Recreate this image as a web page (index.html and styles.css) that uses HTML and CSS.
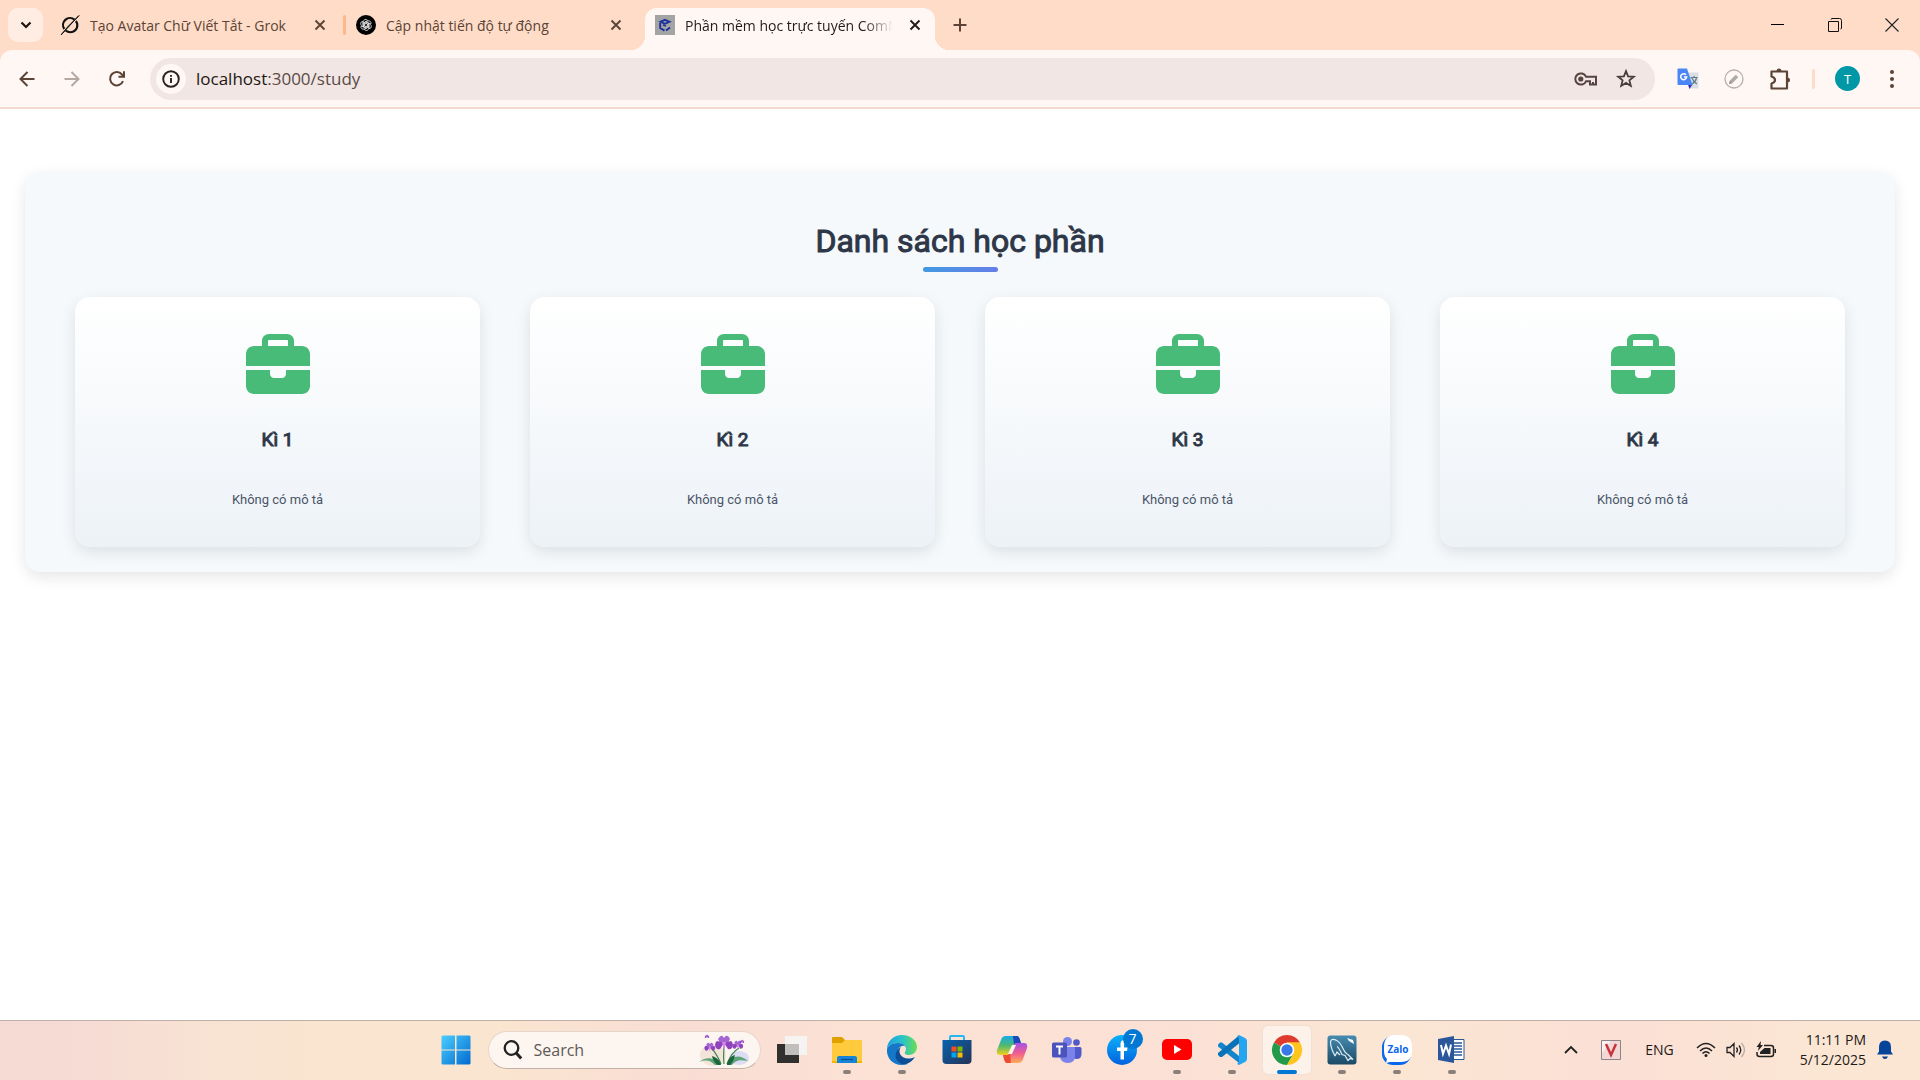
FILE: index.html
```html
<!DOCTYPE html>
<html lang="vi">
<head>
<meta charset="utf-8">
<meta name="viewport" content="width=device-width, initial-scale=1">
<title>Phần mềm học trực tuyến</title>
<link rel="stylesheet" href="styles.css">
</head>
<body>
<svg class="defs" aria-hidden="true">
  <symbol id="close" viewBox="0 0 12 12"><path d="M1.5 1.5l9 9m0-9l-9 9" stroke="currentColor" stroke-width="1.9" fill="none"/></symbol>
  <symbol id="briefcase" viewBox="0 0 512 480"><path fill="#48bb78" d="M184 48H328c4.4 0 8 3.6 8 8V96H176V56c0-4.4 3.6-8 8-8zm-56 8V96H64C28.7 96 0 124.7 0 160v96H512V160c0-35.3-28.7-64-64-64H384V56c0-30.9-25.1-56-56-56H184c-30.9 0-56 25.1-56 56zM512 288H320v32c0 17.7-14.3 32-32 32H224c-17.7 0-32-14.3-32-32V288H0V416c0 35.3 28.7 64 64 64H448c35.3 0 64-28.7 64-64V288z"/></symbol>
</svg>

<header class="browser">
  <div class="tabstrip">
    <button class="tab-search" aria-label="Search tabs"><svg width="12" height="8" viewBox="0 0 12 8"><path d="M1.500 1.500L6 6l4.500-4.500" fill="none" stroke="#1d1512" stroke-width="2.200"/></svg></button>
    <div class="tab tab-first">
      <svg class="favicon" viewBox="0 0 20 20"><path d="M14.500 4.600A7 7 0 0 0 4.300 14M5.700 15.500A7 7 0 0 0 15.900 6" fill="none" stroke="#111" stroke-width="2.200"/><path d="M1 20L19 .5 8 11.500z" fill="#111" stroke="#111"/></svg>
      <span class="tab-title">Tạo Avatar Chữ Viết Tắt - Grok</span>
      <button class="icon-button" aria-label="Close tab"><svg width="12" height="12"><use href="#close"/></svg></button>
    </div>
    <span class="divider"></span>
    <div class="tab tab-second">
      <svg class="favicon" viewBox="0 0 20 20"><circle cx="10" cy="10" r="10" fill="#000"/><g fill="none" stroke="#fff" stroke-width=".7"><path id="petal" d="M7.400 11.500V6.700a2.300 2.300 0 0 1 4.200-1.300l-3 1.800v4"/><use href="#petal" transform="rotate(60 10 10)"/><use href="#petal" transform="rotate(120 10 10)"/><use href="#petal" transform="rotate(180 10 10)"/><use href="#petal" transform="rotate(240 10 10)"/><use href="#petal" transform="rotate(300 10 10)"/></g></svg>
      <span class="tab-title">Cập nhật tiến độ tự động</span>
      <button class="icon-button" aria-label="Close tab"><svg width="12" height="12"><use href="#close"/></svg></button>
    </div>
    <div class="tab tab-active">
      <svg class="favicon" viewBox="0 0 20 20"><path fill="#a3a5a5" d="M0 0h20v20H0z"/><path d="M14.500 6.800L10 4.800 5.500 6.800 10 8.800zM5.200 8v5l4.300 2.600M15 12.500l-4 3" fill="none" stroke="#1c2f9c" stroke-width="1.900"/><path d="M8 10l3 1" stroke="#1c2f9c" stroke-width="1.500"/></svg>
      <span class="tab-title">Phần mềm học trực tuyến ComM</span>
      <button class="icon-button" aria-label="Close tab"><svg width="12" height="12"><use href="#close"/></svg></button>
    </div>
    <button class="icon-button new-tab" aria-label="New tab"><svg width="14" height="14"><path d="M7 .5v13M.5 7h13" stroke="currentColor" stroke-width="2"/></svg></button>
    <div class="window-controls">
      <button class="window-button" aria-label="Minimize"><svg width="14" height="14"><path d="M0 6.500h13" stroke="#000"/></svg></button>
      <button class="window-button" aria-label="Restore"><svg width="14" height="14" fill="none" stroke="#111"><path d="M.5 3.500h10v10H.5zM3 1.500Q3 .5 4 .5h7.500q2 0 2 2V10q0 1-1 1"/></svg></button>
      <button class="window-button" aria-label="Close"><svg width="14" height="14"><path d="M.5.5l13 13m0-13l-13 13" stroke="#222" stroke-width="1.100"/></svg></button>
    </div>
  </div>

  <div class="toolbar">
    <div class="nav-buttons">
      <button class="icon-button" aria-label="Back"><svg width="16" height="16"><path d="M15.500 8H1.500M8.500 1L1.500 8l7 7" fill="none" stroke="currentColor" stroke-width="2"/></svg></button>
      <button class="icon-button faded" aria-label="Forward"><svg width="16" height="16"><path d="M.5 8h14M7.500 1l7 7-7 7" fill="none" stroke="currentColor" stroke-width="2"/></svg></button>
      <button class="icon-button" aria-label="Reload"><svg width="16" height="16"><path d="M14 10.200A6.700 6.700 0 1 1 13 3.500l1.500 1.700" fill="none" stroke="currentColor" stroke-width="2"/><path d="M16 .3v6.500H9.500v-2H14V.3z" fill="currentColor"/></svg></button>
    </div>
    <div class="address">
      <button class="site-info" aria-label="Site information"><svg width="18" height="18" fill="none" stroke="#2a211e" stroke-width="1.900"><circle cx="9" cy="9" r="7.800"/><path d="M9 8v5M9 5v1.800"/></svg></button>
      <a class="url" href="#">localhost<span>:3000/study</span></a>
      <button class="icon-button address-icon" aria-label="Passwords"><svg width="23" height="14" fill="none" stroke="#55443f" stroke-width="2"><path d="M12 4.700A5.600 5.600 0 1 0 12 9.300h4V12.500h3V10h0v2.500h3V4.700z"/><circle cx="6.800" cy="7" r="2.600" fill="#55443f" stroke="none"/></svg></button>
      <button class="icon-button address-icon" aria-label="Bookmark"><svg width="20" height="20" viewBox="0 0 20 20"><path d="M10 2.200l2.100 5.200 5.700.4-4.400 3.600 1.400 5.500L10 13.900l-4.800 3 1.400-5.500-4.400-3.600 5.700-.4z" fill="none" stroke="#4a3c37" stroke-width="1.800"/></svg></button>
    </div>
    <div class="extensions">
      <button class="icon-button" aria-label="Google Translate"><svg width="22" height="22"><path d="M9 4.500h12.500v16H12z" fill="#dcdfe2"/><path d="M13.500 9.500h7M17 8v1.500M15 10c1 3 3 5 5 6M19.500 10c-.7 3-2.500 5-4.500 6" stroke="#607d8b" stroke-width="1.200" fill="none"/><path d="M11 16.500h4.500l-3 4.500z" fill="#3730c8"/><path d="M1.500.5H10L15.500 17h-14Q.5 17 .5 16V1.500q0-1 1-1z" fill="#4a86f5"/><path d="M9 6.700A3 3 0 1 0 9.700 9H7" fill="none" stroke="#fff" stroke-width="1.500"/></svg></button>
      <button class="icon-button" aria-label="Editor"><svg width="20" height="20"><circle cx="10" cy="10" r="9" fill="none" stroke="#b5b1af" stroke-width="1.300"/><path d="M6.500 13.500l6.500-6.500" stroke="#aaa" stroke-width="3.500"/><path d="M5 15l.8-3 2.200 2.200z" fill="#888"/></svg></button>
      <button class="icon-button" aria-label="Extensions"><svg width="22" height="22"><path d="M2.500 3.500h15.500v17H2.500v-5q3.500-1 3.500-3.500T2.500 8.500z" fill="none" stroke="#5b4335" stroke-width="2.200" stroke-linejoin="round"/><path d="M7.500 3.500a2.500 3 0 0 1 5 0zM18 9.500a3 2.500 0 0 1 0 5z" fill="#5b4335"/></svg></button>
    </div>
    <span class="divider divider-short"></span>
    <button class="avatar">T</button>
    <button class="icon-button" aria-label="Menu"><svg width="6" height="18" fill="#5b4335"><circle cx="3" cy="2" r="2"/><circle cx="3" cy="9" r="2"/><circle cx="3" cy="16" r="2"/></svg></button>
  </div>
</header>

<main class="page">
  <section class="panel">
    <h1 class="panel-title">Danh sách học phần</h1>
    <div class="cards">
      <article class="card"><svg class="card-icon"><use href="#briefcase"/></svg><h2>Kì 1</h2><p>Không có mô tả</p></article>
      <article class="card"><svg class="card-icon"><use href="#briefcase"/></svg><h2>Kì 2</h2><p>Không có mô tả</p></article>
      <article class="card"><svg class="card-icon"><use href="#briefcase"/></svg><h2>Kì 3</h2><p>Không có mô tả</p></article>
      <article class="card"><svg class="card-icon"><use href="#briefcase"/></svg><h2>Kì 4</h2><p>Không có mô tả</p></article>
    </div>
  </section>
</main>

<footer class="taskbar">
  <div class="task-center">
    <button class="start" aria-label="Start"><svg width="30" height="30"><defs><linearGradient id="win" x2="1" y2="1" gradientUnits="userSpaceOnUse" gradientTransform="scale(30)"><stop stop-color="#4cd0ff"/><stop offset="1" stop-color="#0068cf"/></linearGradient></defs><path fill="url(#win)" d="M1.500.5H14v14H.5v-13zM15.500.5H28.500l1 1v13h-14zM.5 15.500H14v14H1.500l-1-1zM15.500 15.500h14v13l-1 1h-13z"/></svg></button>
    <label class="search">
      <svg width="20" height="20" fill="none" stroke="#222" stroke-width="2.300"><circle cx="8.500" cy="8" r="6.800"/><path d="M13.200 13l5 5.500" stroke-width="3"/></svg>
      <input type="text" placeholder="Search" aria-label="Search">
      <svg width="56" height="34" viewBox="0 0 56 34">
        <ellipse cx="17" cy="22" rx="13" ry="11" fill="#f4e3d8"/><ellipse cx="43" cy="25" rx="10" ry="7" fill="#dcdcf4"/>
        <path d="M28 31C27 22 28 15 28 12M25 31C22 23 18 18 15 14M31 31c3-8 7-13 12-16" stroke="#3b8a48" stroke-width="1.200" fill="none"/>
        <path d="M24 32C18 23 9 24 3 29c8-3 12-1 16 3zM31 32c5-10 13-11 21-4-9-2-13 0-16 4z" fill="#5da578"/><path d="M25 32c-1-5-5-8-9-9 1 5 4 8 6 9zM31 32c0-5 4-9 8-10-1 5-3 8-5 10z" fill="#1d653e"/>
        <g id="iris"><path d="M22 6c3-4 4-4 6-1 2-3 4-3 6 1l-3 6h-6z" fill="#a566d4"/><path d="M21 8c-4 3-1 10 3 8l4-6 4 6c4 2 7-5 3-8l-7 2z" fill="#8f43bd"/><path d="M26 9h4l-2 9z" fill="#cf8be6"/></g>
        <use href="#iris" transform="translate(-3 8) scale(.6)"/><use href="#iris" transform="translate(25 6) scale(.6)"/><use href="#iris" transform="translate(4 1) scale(.25)"/><use href="#iris" transform="translate(39 6) scale(.25)"/>
      </svg>
    </label>
    <nav class="apps" aria-label="Taskbar">
      <button class="app" aria-label="Task view"><svg viewBox="0 0 30 30"><path d="M0 9h22v19H0z" fill="#30302e"/><path d="M8 1h22v19H8z" fill="#f4f4f4" opacity=".95"/><path d="M8 9h14v11H8z" fill="#c0bfbd"/></svg></button>
      <button class="app running" aria-label="File Explorer"><svg viewBox="0 0 30 30"><path d="M0 3q0-1 1-1h9l3 3v5H0z" fill="#e0a100"/><path d="M0 8h10l3-3h16q1 0 1 1v22H0z" fill="#ffcb3d"/><path d="M0 26h30v2H0z" fill="#f5b400"/><path d="M5 28v-5q0-2 2-2h16q2 0 2 2v5z" fill="#1684d8"/><path d="M9 24.500h12" stroke="#064f91" stroke-width="1.200"/></svg></button>
      <button class="app running" aria-label="Edge"><svg viewBox="0 0 30 30"><defs><linearGradient id="edge"><stop stop-color="#1f9fe0"/><stop offset=".5" stop-color="#28c3cc"/><stop offset="1" stop-color="#6ade50"/></linearGradient></defs><path d="M0 14C0 6 7 0 15 0c9 0 15 6 15 12 0 5-4 8-8 8-3 0-5-1-4-3 3-4-1-9-7-9C5 8 1 11 0 14z" fill="url(#edge)"/><path d="M0 14c1-3 5-6 11-6 3 0 6 1 7 3-5-1-8 3-7 8 1 6 6 10 10 10C9 33-1 25 0 14z" fill="#1577c8"/><path d="M14 12c-5 7 3 15 14 10-4 6-10 9-15 6-7-4-5-13 1-16z" fill="#0c4f96"/></svg></button>
      <button class="app" aria-label="Microsoft Store"><svg viewBox="0 0 30 30"><defs><linearGradient id="store" x2="1" y2="1"><stop stop-color="#0763b0"/><stop offset="1" stop-color="#263354"/></linearGradient></defs><path d="M8 7V2q0-1 1-1h12q1 0 1 1v5" fill="none" stroke="#25b9f2" stroke-width="2"/><path d="M.5 5h29v20q0 4-4 4h-21q-4 0-4-4z" fill="url(#store)"/><path d="M9.500 11.500h5v5h-5z" fill="#f25022"/><path d="M15.500 11.500h5v5h-5z" fill="#7fba00"/><path d="M9.500 17.500h5v5h-5z" fill="#00a4ef"/><path d="M15.500 17.500h5v5h-5z" fill="#ffb900"/></svg></button>
      <button class="app" aria-label="Copilot"><svg viewBox="0 0 30 30"><defs><linearGradient id="cop1" x2="0" y2="1"><stop stop-color="#18a9e8"/><stop offset=".5" stop-color="#4dba70"/><stop offset="1" stop-color="#f6d01e"/></linearGradient><linearGradient id="cop2" x2="0" y2="1"><stop stop-color="#a353e8"/><stop offset=".5" stop-color="#ee5b92"/><stop offset="1" stop-color="#ffac55"/></linearGradient></defs><path d="M9 1h11q2 0 3 4l1 3h-4q-3 0-4 3l-2 6q-1 3-4 3H3q-4 0-3-5L4 5q1-4 5-4z" fill="url(#cop1)"/><path d="M16 1h4q2 0 3 4l1 3h-4q-2 0-3 2z" fill="#1c48b8"/><path d="M21 28H10q-2 0-3-4l-1-4h4q3 0 4-3l2-6q1-3 4-3h7q4 0 3 5l-4 11q-1 4-5 4z" fill="url(#cop2)"/><path d="M14 28h-4q-2 0-3-4l-1-4h4q2 0 3-2z" fill="#ee4b35"/><path d="M15 10h4l-4 9h-4z" fill="#fff3ea"/></svg></button>
      <button class="app" aria-label="Teams"><svg viewBox="0 0 30 30"><circle cx="15.500" cy="6.500" r="4.500" fill="#7b83eb"/><circle cx="24.500" cy="7.500" r="3.300" fill="#5059c9"/><path d="M20 12h8q1.500 0 1.500 1.500V19q0 5-5 5-4 0-4.500-3z" fill="#5059c9"/><path d="M10 12h12q1 0 1 1v8q0 7-7 7-8 0-8-8z" fill="#7b83eb"/><rect y="7.500" width="15" height="15" rx="1.500" fill="#4b53bc"/><path d="M4 11.500h7M7.500 11.500v8" stroke="#fff" stroke-width="2"/></svg></button>
      <button class="app" aria-label="Facebook"><svg viewBox="0 0 30 30"><defs><linearGradient id="fb" x2="0" y2="1"><stop stop-color="#0db1fa"/><stop offset="1" stop-color="#0062df"/></linearGradient></defs><circle cx="15" cy="15" r="15" fill="url(#fb)"/><path d="M13.500 24.500V16H10v-3.500h3.500V9q0-4 4-4l1 .2v3Q17 8 17 10v2.500h3.500L20 16h-3v8.500z" fill="#fff"/></svg><span class="badge">7</span></button>
      <button class="app running" aria-label="YouTube"><svg viewBox="0 0 30 30"><rect y="4" width="30" height="21" rx="5" fill="#f00"/><path d="M12 10l7.500 4.500L12 19z" fill="#fff"/></svg></button>
      <button class="app running" aria-label="Visual Studio Code"><svg viewBox="0 0 30 30"><path d="M1 9.500l2-2h2L22 21v7L1 11.500z" fill="#1285cc"/><path d="M1 20l2 2h2L22 8.500V.5L1 18z" fill="#0873b8"/><path d="M22 0l6 3q2 1 2 3v18q0 2-2 3l-6 3-2-1 2-2V3l-2-2z" fill="#25a5ef"/></svg></button>
      <button class="app running current" aria-label="Chrome"><svg viewBox="0 0 30 30"><path d="M15 15L2 7.500A15 15 0 0 1 28 7.500z" fill="#df3a2e"/><path d="M15 15L2 7.500A15 15 0 0 0 15 30l6.500-11.200z" fill="#219b4a"/><path d="M15 15V7.500h13A15 15 0 0 1 15 30l6.500-11.200z" fill="#fdc51e"/><path d="M15 7.500h13L15 15z" fill="#fdc51e"/><circle cx="15" cy="15" r="7.300" fill="#fff"/><circle cx="15" cy="15" r="5.700" fill="#3978e8"/></svg></button>
      <button class="app running" aria-label="MySQL Workbench"><svg viewBox="0 0 30 30"><defs><linearGradient id="sql" x2="0" y2="1"><stop stop-color="#468bb0"/><stop offset="1" stop-color="#1c4a66"/></linearGradient></defs><rect x=".5" y=".5" width="29" height="29" rx="3" fill="url(#sql)"/><path d="M8 21C4 14 2 6 5 4.500c4-1 8 3 10 7s3 7 6 8l5 5-3-1-2 2-3-5-3-1c-2-4-3-7-5-8M8 21l2-4 3 3" fill="none" stroke="#e0edf2" stroke-width="1.200"/><path d="M20 3l2 3 5 3-1-4-3-1" fill="#fff"/></svg></button>
      <button class="app running" aria-label="Zalo"><svg viewBox="0 0 30 30"><rect y="1" width="29" height="29" rx="11" fill="#0867ee"/><path d="M13 0h6q11 0 11 12v4q0 11-11 11H8l-4 1 1-4q-3-3-3-8v-4Q2 0 13 0z" fill="#fff"/><text x="16" y="18" text-anchor="middle" class="zalo">Zalo</text></svg></button>
      <button class="app running" aria-label="Word"><svg viewBox="0 0 30 30"><path d="M15 4.500h12v20H15z" fill="#fff" stroke="#2b579a"/><path d="M17 8h8M17 11h8M17 14h8M17 17h8M17 20h8" stroke="#2b579a" stroke-width="1.500"/><path d="M1 4l16-3v27L1 25z" fill="#2b579a"/><path d="M4 10l2 9 3-8.500L12 19l2-9.500" fill="none" stroke="#fff" stroke-width="2"/></svg></button>
    </nav>
  </div>
  <div class="tray">
    <button class="icon-button" aria-label="Show hidden icons"><svg width="14" height="9"><path d="M1 8l6-6 6 6" fill="none" stroke="#222" stroke-width="1.800"/></svg></button>
    <svg class="tray-v" width="20" height="20"><path d="M.5.5h19v19H.5z" fill="#f3d6d6" stroke="#8d8585"/><path d="M1 1h9L1 13z" fill="#faf2f2"/><path d="M5 4l5 11 5-11" fill="none" stroke="#c9343a" stroke-width="2.500"/></svg>
    <button class="language">ENG</button>
    <button class="status" aria-label="Network, volume and battery">
      <svg width="20" height="16" fill="none" stroke="#222" stroke-width="1.500"><path d="M1 6q9-9 18 0M4 9q6-6 12 0M6.500 11.500q3.500-3.500 7 0"/><circle cx="10" cy="13.500" r="1.500" fill="#222" stroke="none"/></svg>
      <svg width="20" height="16" fill="none" stroke="#222" stroke-width="1.300"><path d="M1 5.500h3L8 1.500v13l-4-4H1zM10.500 5.500q2 2.500 0 5M13 3.500q3.500 4.500 0 9"/><path d="M15.500 1q6 7 0 14" stroke="#bbaaa4"/></svg>
      <svg width="20" height="18"><path d="M8 4.500h7q2.500 0 2.500 2.500v6q0 2.500-2.500 2.500H3.500Q1 15.500 1 13v-2" fill="none" stroke="#222" stroke-width="1.500"/><path d="M8.500 7h6v6H4v-2zM18.500 8h1.500v4h-1.500zM5 0L.5 6h2.300L2 10l5-6H4.500z" fill="#222"/></svg>
    </button>
    <time class="clock" datetime="2025-05-12T23:11">11:11 PM<br>5/12/2025</time>
    <button class="icon-button" aria-label="Notifications"><svg width="16" height="19"><path d="M0 14.500l2-3V7q0-6.500 6-6.500T14 7v4.500l2 3zM5 16.500h6q-1 2.500-3 2.500t-3-2.500z" fill="#06439a"/></svg></button>
  </div>
</footer>
</body>
</html>
```
FILE: styles.css
```css
* { box-sizing: border-box; }

body {
  margin: 0;
  min-height: 100vh;
  display: flex;
  flex-direction: column;
  background: #fff;
  font-family: "Open Sans", "Noto Sans", sans-serif;
}

button {
  margin: 0;
  padding: 0;
  border: 0;
  background: none;
  color: inherit;
  font: inherit;
  display: grid;
  place-items: center;
}

svg { display: block; flex: none; overflow: visible; }
.defs { width: 0; height: 0; position: absolute; }

/* Browser frame */
.browser { background: #ffdcc8; }

.tabstrip {
  display: flex;
  align-items: center;
  height: 50px;
  padding-left: 8px;
  font-size: 14px;
  color: #5b4335;
}

.tab-search {
  width: 35px;
  height: 34px;
  border-radius: 10px;
  background: #ffede4;
}

.tab {
  display: flex;
  align-items: center;
  gap: 10px;
  height: 42px;
  margin-top: 8px;
  padding: 0 8px 8px 10px;
}

.tab-first { width: 293px; margin-left: 7px; padding-right: 11px; }
.tab-second { width: 290px; }
.tab-active {
  position: relative;
  width: 290px;
  margin-left: 9px;
  border-radius: 12px 12px 0 0;
  background: #fff7f4;
  color: #241a16;
}
.tab-active::before,
.tab-active::after {
  content: "";
  position: absolute;
  bottom: 0;
  width: 14px;
  height: 14px;
}
.tab-active::before { right: 100%; background: radial-gradient(circle at 0 0, transparent 14px, #fff7f4 14px); }
.tab-active::after { left: 100%; background: radial-gradient(circle at 100% 0, transparent 14px, #fff7f4 14px); }

.favicon { width: 20px; height: 20px; }
.tab-title {
  flex: 1;
  min-width: 0;
  overflow: hidden;
  white-space: nowrap;
}
.tab-active .tab-title { mask-image: linear-gradient(to right, #000 86%, transparent); }

.icon-button { width: 24px; height: 24px; color: #5b4335; flex: none; }
.tab-active .icon-button { color: #241a16; }
.new-tab { margin-left: 13px; }
.faded { color: #b5a8a3; }

.divider {
  width: 3px;
  height: 20px;
  border-radius: 2px;
  background: #ffb78c;
}
.divider-short { background: #ffdcc8; }

.window-controls { display: flex; margin-left: auto; }
.window-button { width: 57px; height: 50px; }

.toolbar {
  display: flex;
  align-items: center;
  height: 59px;
  padding: 0 16px 0 15px;
  border-bottom: 2px solid #f3dace;
  border-radius: 12px 12px 0 0;
  background: #fff7f4;
}
.nav-buttons { display: flex; gap: 21px; }

.address {
  flex: 1;
  display: flex;
  align-items: center;
  height: 42px;
  margin-left: 21px;
  padding: 0 17px 0 6px;
  border-radius: 21px;
  background: #f1e6e4;
}
.site-info {
  width: 30px;
  height: 30px;
  border-radius: 50%;
  background: #fff7f4;
}
.url {
  flex: 1;
  margin-left: 10px;
  font-size: 17px;
  color: #1d1613;
  text-decoration: none;
}
.url span { color: #5b4a44; }
.address-icon + .address-icon { margin-left: 17px; }

.extensions { display: flex; gap: 22px; margin: 0 20px 0 21px; }
.avatar {
  width: 25px;
  height: 25px;
  margin: 0 20px;
  border-radius: 50%;
  background: #0097a7;
  color: #fff;
  font-size: 13px;
}

/* Page content */
.page {
  flex: 1;
  padding: 63px 25px 40px;
  font-family: Roboto, sans-serif;
}
.panel {
  padding: 51px 50px 25px;
  border-radius: 15px;
  background: #f5f9fc;
  box-shadow: 0 5px 15px rgba(0, 0, 0, 0.1);
}
.panel-title {
  display: flex;
  flex-direction: column;
  align-items: center;
  gap: 7px;
  margin: 0 0 25px;
  font-size: 32px;
  line-height: 37px;
  font-weight: 400;
  color: #2d3748;
  -webkit-text-stroke: 1px;
}
.panel-title::after {
  content: "";
  width: 75px;
  height: 5px;
  border-radius: 3px;
  background: linear-gradient(90deg, #4299e1, #667eea);
}
.cards {
  display: grid;
  grid-template-columns: repeat(4, 1fr);
  gap: 50px;
}
.card {
  display: flex;
  flex-direction: column;
  align-items: center;
  height: 250px;
  padding-top: 37px;
  border-radius: 15px;
  background: linear-gradient(180deg, #fff, #edf2f7);
  box-shadow: 0 5px 15px rgba(0, 0, 0, 0.1);
}
.card-icon { width: 64px; height: 60px; }
.card h2 {
  margin: 34px 0 0;
  font-size: 19px;
  line-height: 24px;
  font-weight: 400;
  color: #2d3748;
  -webkit-text-stroke: 1px;
}
.card p {
  margin: 38px 0 0;
  font-size: 13px;
  line-height: 20px;
  color: #4a5568;
}

/* Taskbar */
.taskbar {
  display: grid;
  grid-template-columns: 1fr auto 1fr;
  align-items: center;
  height: 60px;
  padding-bottom: 2px;
  border-top: 1px solid #beb0a8;
  background: linear-gradient(90deg, #f6dad4, #f6dcd4 5%, #f8e2d3 10%, #fae5d0 17%, #fae5d0 26%, #f9ddd4 36%, #fbe2d4 45%, #fbe1d5 62%, #fbe6d3 72%, #fbe0d5 84%, #fbe6d3 96%);
}
.task-center {
  grid-column: 2;
  display: flex;
  align-items: center;
  padding-right: 4px;
}
.start { width: 30px; height: 30px; }
.search {
  display: flex;
  align-items: center;
  width: 273px;
  height: 38px;
  margin-left: 17px;
  padding: 0 8px 0 14px;
  border: 1px solid #e8d5ca;
  border-bottom-color: #c2afa6;
  border-radius: 19px;
  background: #fdf5f0;
}
.search input {
  flex: 1;
  min-width: 0;
  margin-left: 11px;
  padding: 0;
  border: 0;
  outline: 0;
  background: none;
  font: 16px "Open Sans", "Noto Sans", sans-serif;
}
.search input::placeholder { color: #5f5955; opacity: 1; }

.apps { display: flex; gap: 7px; margin-left: 7px; }
.app {
  position: relative;
  width: 48px;
  height: 48px;
  border-radius: 5px;
}
.app svg { width: 30px; height: 30px; }
.running::after {
  content: "";
  position: absolute;
  bottom: 0;
  width: 8px;
  height: 4px;
  border-radius: 2px;
  background: #8b8079;
}
.current { background: #fdf2ea; box-shadow: 0 0 1px 1px #f0dfd3; }
.current::after { width: 20px; background: #0078d4; }
.badge {
  position: absolute;
  top: 3px;
  right: 3px;
  width: 20px;
  height: 20px;
  border-radius: 50%;
  background: #0078d4;
  color: #fff;
  font-size: 14px;
  line-height: 20px;
  text-align: center;
}
.zalo { font: bold 10px "Open Sans", sans-serif; fill: #0867ee; }

.tray {
  grid-column: 3;
  display: flex;
  align-items: center;
  justify-content: flex-end;
  padding-right: 23px;
  color: #1d1a18;
  font-size: 14px;
}
.tray-v { margin: 0 24px 0 18px; }
.status { display: flex; gap: 10px; margin: 0 24px 0 22px; }
.clock { margin-right: 7px; line-height: 20px; text-align: right; }
```
